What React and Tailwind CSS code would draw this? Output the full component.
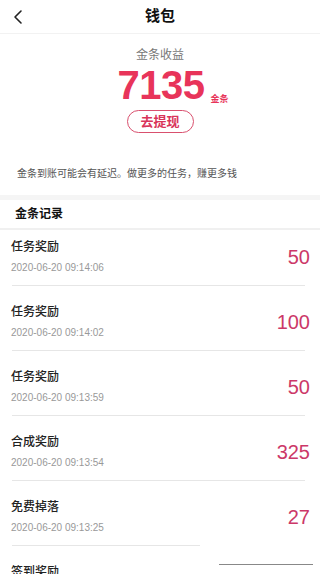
import { ChevronLeft } from 'lucide-react';

const records = [
    { title: '任务奖励', time: '2020-06-20 09:14:06', amount: 50 },
    { title: '任务奖励', time: '2020-06-20 09:14:02', amount: 100 },
    { title: '任务奖励', time: '2020-06-20 09:13:59', amount: 50 },
    { title: '合成奖励', time: '2020-06-20 09:13:54', amount: 325 },
    { title: '免费掉落', time: '2020-06-20 09:13:25', amount: 27 },
    { title: '签到奖励', time: '2020-06-20 09:13:10', amount: 500 },
];

const font = { fontFamily: '"Liberation Sans", "Noto Sans CJK SC", sans-serif' };

// one row of the gold bar log
function RecordRow({ item, first, shortLine }) {
    return (
        <div className={`relative flex flex-col ${first ? 'pt-[9px]' : 'pt-[18px]'}`}>
            <div className="flex items-center justify-between pl-[11px] pr-[10px]">
                <div className="flex flex-col">
                    <span className="text-[12px] leading-[16px] font-medium text-[#222]">{item.title}</span>
                    <span className="mt-[7px] text-[10px] leading-[12px] text-[#999]">{item.time}</span>
                </div>
                <span className="text-[20px] leading-[24px] text-[#cc3868]">{item.amount}</span>
            </div>
            <div className={`mt-[11px] h-px bg-[#e6e6e6] ml-[12px] ${shortLine ? 'w-[188px]' : 'mr-[15px]'}`} />
        </div>
    );
}

export default function App() {
    return (
        <div className="w-[320px] h-[574px] overflow-hidden bg-white" style={font}>
            {/* top bar */}
            <div className="grid grid-cols-[40px_1fr_40px] items-center h-[34px] border-b border-[#f2f2f2]">
                <ChevronLeft className="ml-[6px] text-[#222]" size={24} strokeWidth={1.6} />
                <h1 className="text-center text-[15px] font-bold text-[#111]">钱包</h1>
                <div />
            </div>

            {/* balance */}
            <div className="flex flex-col items-center pt-[13px]">
                <span className="text-[12px] leading-[16px] text-[#777]">金条收益</span>
                <div className="flex items-end mt-[2px] ml-[26px]">
                    <span className="text-[40px] leading-[40px] font-bold text-[#e8345a] tracking-[-0.5px]">7135</span>
                    <span className="ml-[6px] mb-[1px] text-[9px] leading-[10px] font-bold text-[#e8345a]">金条</span>
                </div>
                <button className="mt-[5px] w-[67px] h-[23px] rounded-full border border-[#d9506e] text-[13px] font-bold text-[#d9345a]">
                    去提现
                </button>
            </div>

            <p className="mt-[34px] pl-[17px] text-[10px] leading-[14px] text-[#555]">
                金条到账可能会有延迟。做更多的任务，赚更多钱
            </p>

            <div className="mt-[14px] h-[5px] bg-[#f5f5f5]" />

            {/* log */}
            <div className="h-[30px] flex items-center pl-[15px] border-b-2 border-[#f0f0f0]">
                <span className="text-[12px] font-bold text-[#111]">金条记录</span>
            </div>

            <div className="relative">
                {records.map((item, i) => (
                    <RecordRow key={i} item={item} first={i === 0} shortLine={i === 4} />
                ))}
                <div className="absolute left-[219px] top-[334px] w-[94px] h-px bg-[#888]" />
            </div>
        </div>
    );
}
